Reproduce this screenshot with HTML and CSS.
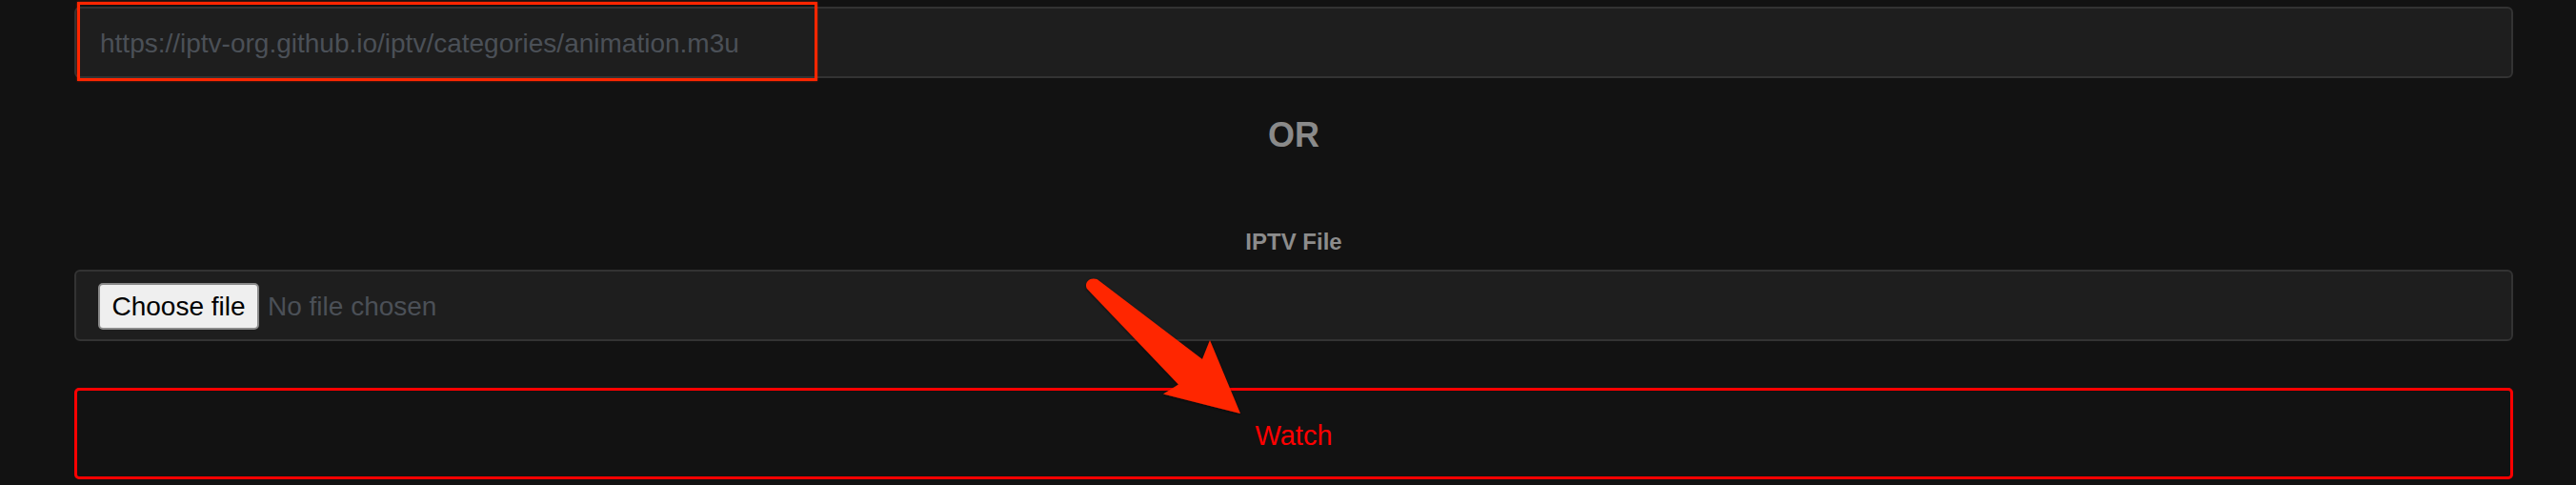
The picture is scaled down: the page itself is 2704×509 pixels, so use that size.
FILE: index.html
```html
<!DOCTYPE html>
<html lang="en">
<head>
<meta charset="utf-8">
<title>IPTV</title>
<link rel="stylesheet" href="styles.css">
</head>
<body>
<main class="page">
  <div class="field url-field">
    <span class="placeholder">https://iptv-org.github.io/iptv/categories/animation.m3u</span>
  </div>
  <div class="divider">OR</div>
  <label class="label">IPTV File</label>
  <div class="field file-field">
    <span class="file-btn">Choose file</span>
    <span class="file-name">No file chosen</span>
  </div>
  <button class="watch">Watch</button>
</main>
<div class="annot-rect"></div>
<svg class="annot-arrow" width="2704" height="509" viewBox="0 0 2704 509" xmlns="http://www.w3.org/2000/svg">
  <defs>
    <filter id="sh" x="-20%" y="-20%" width="140%" height="140%">
      <feDropShadow dx="0" dy="1" stdDeviation="1.5" flood-color="#000" flood-opacity="0.6"/>
    </filter>
  </defs>
  <path filter="url(#sh)" fill="#ff2600" d="M1142 304 C1137 299 1142 290 1151.5 293 L1262 377 L1270 357 L1302 434 L1221 413.5 L1237 403.5 Z"/>
</svg>
</body>
</html>
```

FILE: styles.css
```css
html, body {
  margin: 0;
  padding: 0;
  background: #121212;
}
body {
  width: 2704px;
  height: 509px;
  overflow: hidden;
  position: relative;
  font-family: "Liberation Sans", Arial, sans-serif;
}
.page {
  padding: 7px 66px 0 78px;
  display: flex;
  flex-direction: column;
}
.field {
  box-sizing: border-box;
  height: 75px;
  background: #1e1e1e;
  border: 2px solid #333333;
  border-radius: 6px;
  display: flex;
  align-items: center;
}
.url-field {
  padding-left: 25px;
}
.placeholder {
  font-size: 28px;
  color: #4b5057;
  padding-top: 2px;
}
.divider {
  margin-top: 40px;
  text-align: center;
  font-size: 36px;
  line-height: 40px;
  font-weight: bold;
  color: #8a8a8a;
}
.label {
  margin-top: 77px;
  text-align: center;
  font-size: 24px;
  line-height: 30px;
  font-weight: bold;
  color: #8c8c8c;
}
.file-field {
  margin-top: 14px;
  padding-left: 23px;
}
.file-btn {
  box-sizing: border-box;
  height: 49px;
  width: 169px;
  display: flex;
  align-items: center;
  justify-content: center;
  background: #efefef;
  border: 2px solid #8a8a8a;
  border-radius: 5px;
  color: #000;
  font-size: 28px;
  margin-top: 2px;
}
.file-name {
  margin-left: 9px;
  font-size: 28px;
  color: #4b5057;
  margin-top: 2px;
}
.watch {
  margin-top: 49px;
  box-sizing: border-box;
  height: 96px;
  background: transparent;
  border: 3px solid #ff0000;
  border-radius: 5px;
  color: #ff0000;
  font-family: "Liberation Sans", Arial, sans-serif;
  font-size: 29px;
  padding: 4px 0 0 0;
}
.annot-rect {
  position: absolute;
  left: 81px;
  top: 2px;
  width: 771px;
  height: 77px;
  border: 3px solid #ff2600;
  box-shadow: 0 0 2px rgba(255, 38, 0, 0.6);
}
.annot-arrow {
  position: absolute;
  left: 0;
  top: 0;
  pointer-events: none;
}
```
